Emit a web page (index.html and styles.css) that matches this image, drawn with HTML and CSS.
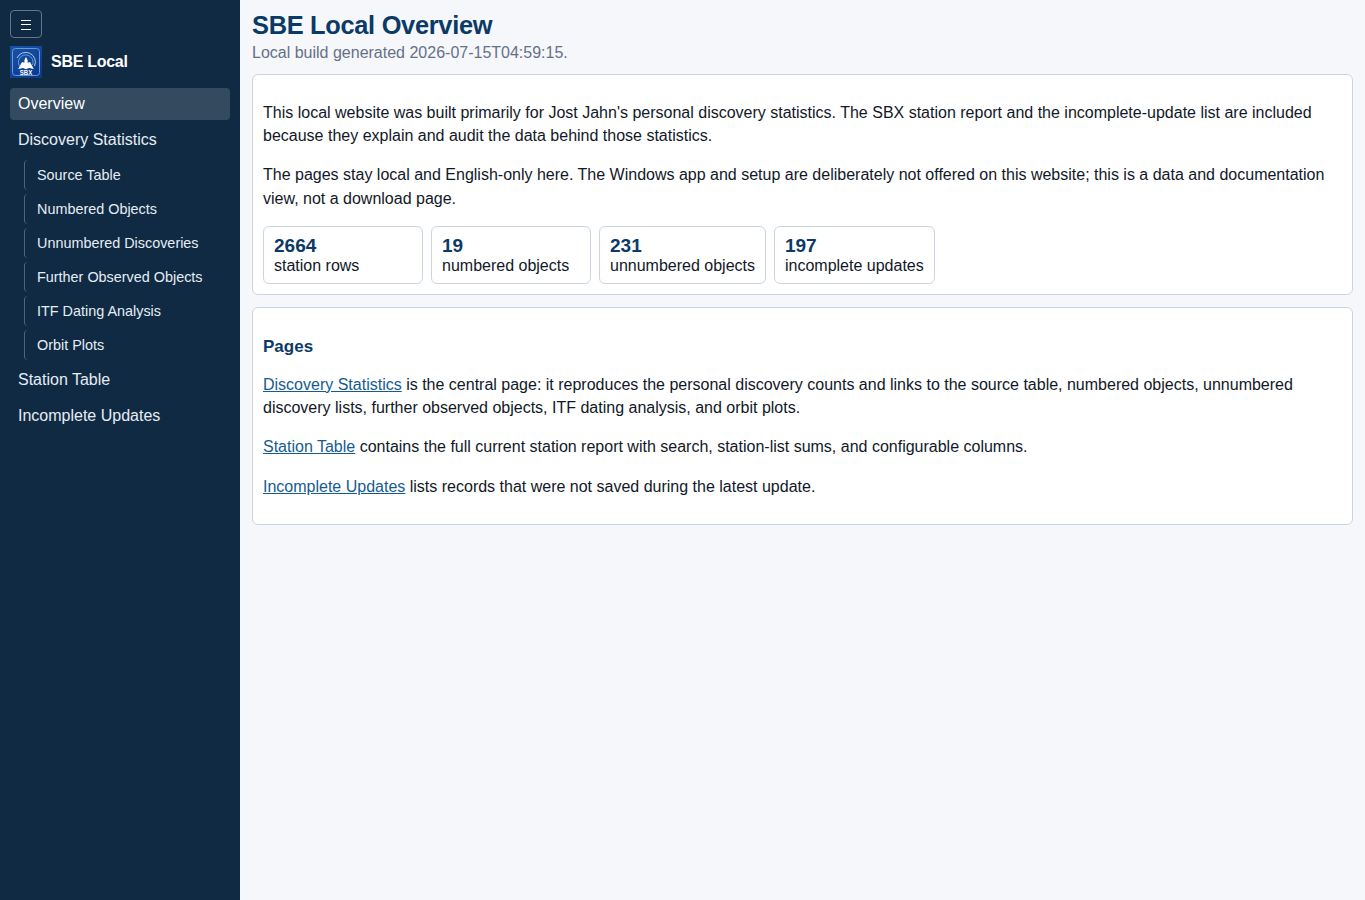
FILE: index.html
```html
<!DOCTYPE html>
<html lang="en">
<head>
<meta charset="utf-8">
<title>SBE Local Overview</title>
<link rel="stylesheet" href="styles.css">
</head>
<body>
<div class="layout">
  <aside class="sidebar">
    <button class="menu-toggle" type="button" aria-label="Toggle navigation"><svg width="12" height="12" viewBox="0 0 12 12"><path d="M1 1.5h10M1 5.5h10M1 10.5h10" stroke="#fff" stroke-width="1" fill="none"/></svg></button>
    <div class="brand">
      <svg class="logo" viewBox="0 0 32 32" width="32" height="32">
        <defs><linearGradient id="sky" x1="0" y1="0" x2="0.6" y2="1"><stop offset="0" stop-color="#1556aa"/><stop offset="1" stop-color="#0a3a90"/></linearGradient></defs>
        <rect width="32" height="32" fill="url(#sky)"/>
        <rect x="2.5" y="2.5" width="27" height="27" rx="3" fill="none" stroke="#6f96cd"/>
        <path d="M7 12A9.6 9.6 0 1 1 24.5 20" fill="none" stroke="#b4c9e6" stroke-width="1"/>
        <path d="M9.5 20A7.3 7.3 0 1 1 22.5 19" fill="none" stroke="#7fa2d4" stroke-width=".9"/>
        <path d="M16 11l1.6 3v2.8l2.4-.8 3.8 7-4.8-1-3 1.2-3-1.2-4.8 1 3.8-7 2.4.8v-2.8z" fill="#fff"/>
        <text x="16" y="29" text-anchor="middle" textLength="12.5" lengthAdjust="spacingAndGlyphs" class="logo-text">SBX</text>
      </svg>
      <span>SBE Local</span>
    </div>
    <nav class="nav">
      <a class="link active">Overview</a>
      <a class="link">Discovery Statistics</a>
      <a class="link sub">Source Table</a>
      <a class="link sub">Numbered Objects</a>
      <a class="link sub">Unnumbered Discoveries</a>
      <a class="link sub">Further Observed Objects</a>
      <a class="link sub">ITF Dating Analysis</a>
      <a class="link sub">Orbit Plots</a>
      <a class="link">Station Table</a>
      <a class="link">Incomplete Updates</a>
    </nav>
  </aside>
  <main class="content">
    <h1>SBE Local Overview</h1>
    <div class="meta">Local build generated 2026-07-15T04:59:15.</div>
    <section class="card">
      <p>This local website was built primarily for Jost Jahn's personal discovery statistics. The SBX station report and the incomplete-update list are included because they explain and audit the data behind those statistics.</p>
      <p>The pages stay local and English-only here. The Windows app and setup are deliberately not offered on this website; this is a data and documentation view, not a download page.</p>
      <div class="stats">
        <div class="stat"><strong>2664</strong><span>station rows</span></div>
        <div class="stat"><strong>19</strong><span>numbered objects</span></div>
        <div class="stat"><strong>231</strong><span>unnumbered objects</span></div>
        <div class="stat"><strong>197</strong><span>incomplete updates</span></div>
      </div>
    </section>
    <section class="card">
      <h2>Pages</h2>
      <p><a href="#">Discovery Statistics</a> is the central page: it reproduces the personal discovery counts and links to the source table, numbered objects, unnumbered discovery lists, further observed objects, ITF dating analysis, and orbit plots.</p>
      <p><a href="#">Station Table</a> contains the full current station report with search, station-list sums, and configurable columns.</p>
      <p><a href="#">Incomplete Updates</a> lists records that were not saved during the latest update.</p>
    </section>
  </main>
</div>
</body>
</html>
```
FILE: styles.css
```css
* { box-sizing: border-box; }
body {
  margin: 0;
  background: #f5f7fb;
  color: #111827;
  font: 16px/1.2 "Liberation Sans", Arial, sans-serif;
}
.layout { display: grid; grid-template-columns: 240px minmax(0, 1fr); min-height: 100vh; }
.sidebar { background: #102a43; color: #fff; padding: 10px; }
.menu-toggle {
  display: flex;
  align-items: center;
  justify-content: center;
  width: 32px;
  height: 28px;
  padding: 2px 0 0;
  background: transparent;
  border: 1px solid #647789;
  border-radius: 4px;
}
.brand { display: flex; align-items: center; gap: 9px; margin: 8px 0 10px; font-weight: 700; letter-spacing: -0.28px; }
.logo { display: block; letter-spacing: 0; }
.logo-text { font: 700 7.4px "Liberation Sans", Arial, sans-serif; fill: #fff; }
.nav { display: flex; flex-direction: column; gap: 4px; }
.link { display: flex; align-items: center; height: 32px; padding: 0 8px; border-radius: 4px; color: #e5edf5; }
.link.active { background: #334a5f; color: #fff; }
.link.sub { height: 30px; margin-left: 14px; padding: 1px 8px 0 12px; border-left: 1px solid #516477; font-size: 14.4px; }
.content { padding: 10px 12px; }
h1 { margin: 0; font-size: 25.4px; line-height: 30px; letter-spacing: -0.3px; color: #0b3a66; }
.meta { margin: 3px 0 12px; line-height: 19px; color: #667085; }
.card { margin-bottom: 12px; padding: 10px; background: #fff; border: 1px solid #cbd5e1; border-radius: 6px; }
.card p { margin: 16px 0; line-height: 1.45; }
.card a { color: #155b92; }
h2 { margin: 19.4px 0 15.4px; font-size: 17px; line-height: 20.4px; color: #0b3a66; }
.card h2 + p { margin-top: 0; }
.stats { display: flex; gap: 8px; }
.stat { min-width: 160px; height: 58px; padding: 8px 10px; border: 1px solid #cbd5e1; border-radius: 6px; }
.stat strong { display: block; font-size: 19px; line-height: 21px; color: #0b3a66; }
.stat span { display: block; line-height: 19px; }
```
